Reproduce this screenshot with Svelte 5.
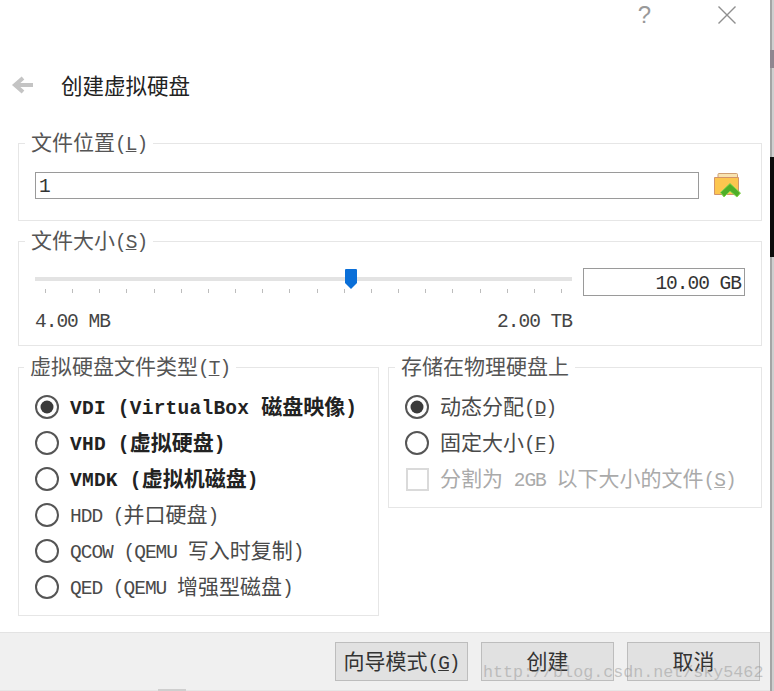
<script>
  const types = [
    { label: 'VDI (VirtualBox 磁盘映像)', bold: true, on: true },
    { label: 'VHD (虚拟硬盘)', bold: true },
    { label: 'VMDK (虚拟机磁盘)', bold: true },
    { label: 'HDD (并口硬盘)' },
    { label: 'QCOW (QEMU 写入时复制)' },
    { label: 'QED (QEMU 增强型磁盘)' }
  ]
  const ticks = Array.from({ length: 20 })

  // latin runs get their own narrower face, &X marks the underlined mnemonic
  function parts(text) {
    const out = []
    for (const run of text.match(/[\x20-\x7e]+|[^\x20-\x7e]+/g)) {
      const latin = /^[\x20-\x7e]/.test(run)
      const bits = latin ? run.split(/(&.)/) : [run]
      for (const bit of bits) {
        if (!bit) continue
        if (bit[0] === '&') out.push({ text: bit[1], latin, mark: true })
        else out.push({ text: bit, latin, mark: false })
      }
    }
    return out
  }
</script>

{#snippet txt(text)}
  {#each parts(text) as p}{#if p.mark}<u class="lat">{p.text}</u>{:else if p.latin}<span class="lat">{p.text}</span>{:else}{p.text}{/if}{/each}
{/snippet}

{#snippet radio(on)}
  <svg class="radio" width="26" height="26" viewBox="0 0 26 26">
    <circle cx="13" cy="13" r="11" fill="#fff" stroke="#555" stroke-width="2" />
    {#if on}<circle cx="13" cy="13" r="6.500" fill="#3a3a3a" />{/if}
  </svg>
{/snippet}

<div class="screen">
  <div class="dialog">
    <div class="content">
      <div class="titlebar">
        <span class="help">?</span>
        <svg class="close" width="18" height="18" viewBox="0 0 18 18">
          <path d="M0.500 0.500 L17.500 17.500 M17.500 0.500 L0.500 17.500" stroke="#8f8f8f" stroke-width="1.400" fill="none" />
        </svg>
      </div>

      <div class="heading">
        <svg width="24" height="20" viewBox="0 0 24 20">
          <path d="M22 10 H6 M12 3 L4 10 L12 17" stroke="#c4c4c4" stroke-width="4" fill="none" />
        </svg>
        <h1>创建虚拟硬盘</h1>
      </div>

      <fieldset class="location">
        <legend>{@render txt('文件位置(&L)')}</legend>
        <div class="row">
          <div class="input lat">1</div>
          <svg class="folder" width="29" height="27" viewBox="0 0 29 27">
            <path d="M5 6 V2.500 Q5 1.500 6 1.500 H23.500 Q24.500 1.500 24.500 2.500 V7 H5 Z" fill="#f8e3b0" stroke="#cf9f72" />
            <path d="M1.500 5.500 H25.500 V22.500 H1.500 Z" fill="#fcc64f" stroke="#d2946a" />
            <path d="M7.500 20.500 L17 11.500 L27.500 21 L24 25 L17 19 L11 25 Z" fill="#4fae28" stroke="#86d64f" />
          </svg>
        </div>
      </fieldset>

      <fieldset class="size">
        <legend>{@render txt('文件大小(&S)')}</legend>
        <div class="size-row">
          <div class="slider">
            <div class="track">
              <svg class="thumb" width="12" height="20" viewBox="0 0 12 20">
                <path d="M0 1 Q0 0 1 0 H11 Q12 0 12 1 V14 L6 20 L0 14 Z" fill="#0a6fd8" />
              </svg>
            </div>
            <div class="ticks">
              {#each ticks as _}<i></i>{/each}
            </div>
            <div class="limits lat"><span>4.00 MB</span><span>2.00 TB</span></div>
          </div>
          <div class="input value lat">10.00 GB</div>
        </div>
      </fieldset>

      <div class="columns">
        <fieldset class="types">
          <legend>{@render txt('虚拟硬盘文件类型(&T)')}</legend>
          {#each types as t}
            <div class="option" class:bold={t.bold}>
              {@render radio(t.on)}
              <span>{@render txt(t.label)}</span>
            </div>
          {/each}
        </fieldset>

        <fieldset class="storage">
          <legend>存储在物理硬盘上</legend>
          <div class="option">
            {@render radio(true)}
            <span>{@render txt('动态分配(&D)')}</span>
          </div>
          <div class="option">
            {@render radio(false)}
            <span>{@render txt('固定大小(&F)')}</span>
          </div>
          <div class="option disabled">
            <i class="check"></i>
            <span>{@render txt('分割为 2GB 以下大小的文件(&S)')}</span>
          </div>
        </fieldset>
      </div>
    </div>

    <div class="footer">
      <button>{@render txt('向导模式(&G)')}</button>
      <button>创建</button>
      <button>取消</button>
      <span class="watermark">http://blog.csdn.net/sky5462</span>
    </div>
  </div>

  <div class="backdrop">
    <i class="speck"></i>
    <i class="dark"></i>
  </div>
</div>

<style>
  :global(body) {
    margin: 0;
    background: #fff;
  }

  .screen {
    display: flex;
    width: 774px;
    height: 691px;
    overflow: hidden;
  }

  .dialog {
    flex: 0 0 769px;
    height: 691px;
    box-sizing: border-box;
    display: flex;
    flex-direction: column;
    background: #fff;
    color: #444;
    font-family: 'Noto Sans CJK SC', sans-serif;
    font-size: 21px;
    line-height: 22px;
  }

  .backdrop {
    flex: 1;
    display: flex;
    flex-direction: column;
    box-sizing: border-box;
    background: #cfcfcf;
    border-left: 2px solid #a5a5a5;
  }

  .speck {
    height: 18px;
    margin: 50px 0 0 -2px;
    background: #8f8690;
  }

  .dark {
    height: 100px;
    margin: 89px 0 0 -2px;
    background: #0c0c0c;
  }

  .lat {
    font-family: 'Liberation Mono', monospace;
    font-size: 19.500px;
    letter-spacing: -1px;
    line-height: 0;
  }

  .content {
    flex: 1;
    padding: 0 8px 0 18px;
    display: flex;
    flex-direction: column;
  }

  .titlebar {
    height: 30px;
    display: flex;
    align-items: center;
    justify-content: flex-end;
    gap: 67px;
    padding-right: 26px;
  }

  .help {
    font-family: 'Liberation Sans', sans-serif;
    font-size: 24px;
    color: #999;
  }

  .heading {
    height: 62px;
    margin: 24px 0 16px -7px;
    display: flex;
    align-items: center;
    gap: 26px;
  }

  h1 {
    margin: 0;
    font-size: 21.500px;
    font-weight: 400;
    color: #222;
  }

  fieldset {
    margin: 0;
    border: 1px solid #e6e6e6;
    padding: 0;
    box-sizing: border-box;
    min-width: 0;
  }

  legend {
    margin-left: 6px;
    padding: 0 6px 4px;
    color: #555;
    line-height: 18px;
  }

  .location {
    height: 89px;
  }

  .row {
    display: flex;
    align-items: center;
    gap: 14px;
    padding: 18px 19px 0 16px;
  }

  .input {
    height: 27px;
    line-height: 29px;
    box-sizing: border-box;
    border: 1px solid #9a9a9a;
    padding: 0 3px;
    flex: 1;
    color: #333;
  }

  .size {
    height: 116px;
    margin-top: 9px;
  }

  .size-row {
    display: flex;
    padding: 17px 16px 0 16px;
    gap: 11px;
  }

  .slider {
    width: 537px;
  }

  .track {
    position: relative;
    height: 4px;
    margin-top: 8px;
    background: #e3e3e3;
  }

  .thumb {
    position: absolute;
    left: 310px;
    top: -8px;
  }

  .ticks {
    display: flex;
    justify-content: space-between;
    padding: 0 10px;
    margin-top: 8px;
  }

  .ticks i {
    width: 1px;
    height: 4px;
    background: #bdbdbd;
  }

  .limits {
    display: flex;
    justify-content: space-between;
    margin-top: 18px;
    color: #444;
    line-height: 22px;
  }

  .value {
    flex: 0 0 162px;
    text-align: right;
    height: 28px;
    line-height: 31px;
    margin-top: -1px;
  }

  .columns {
    display: flex;
    gap: 9px;
    margin-top: 10px;
    align-items: flex-start;
  }

  .types {
    width: 361px;
    height: 260px;
    padding: 11px 15px 0;
  }

  .types legend {
    margin-left: -10px;
  }

  .storage {
    width: 374px;
    height: 152px;
    padding: 11px 15px 0;
  }

  .storage legend {
    margin-left: -9px;
  }

  .option {
    height: 36px;
    display: flex;
    align-items: center;
    gap: 10px;
    color: #4a4a4a;
  }

  .option span {
    padding-bottom: 4px;
  }

  .option .lat {
    padding-bottom: 0;
  }

  .bold {
    font-weight: 700;
    color: #222;
  }

  .bold .lat {
    letter-spacing: 0.250px;
  }

  .radio {
    flex: none;
  }

  .check {
    width: 23px;
    height: 23px;
    margin: 0 1.500px;
    box-sizing: border-box;
    border: 2px solid #dadada;
  }

  .disabled {
    color: #aaa;
  }

  .footer {
    position: relative;
    height: 59px;
    box-sizing: border-box;
    background: #f0f0f0;
    border-top: 1px solid #e3e3e3;
    border-bottom: 1px solid #e6e6e6;
    display: flex;
    justify-content: flex-end;
    align-items: flex-start;
    gap: 13px;
    padding: 9px 10px 0 0;
  }

  .footer::after {
    content: '';
    position: absolute;
    left: 158px;
    bottom: -1px;
    width: 28px;
    height: 2px;
    background: #cfcfcf;
  }

  button {
    width: 133px;
    height: 39px;
    padding: 0 0 3px;
    background: #e1e1e1;
    border: 1px solid #bdbdbd;
    color: #333;
    font: 21px/22px 'Noto Sans CJK SC', sans-serif;
  }

  .watermark {
    position: absolute;
    left: 483px;
    top: 30px;
    color: rgba(150, 150, 150, 0.5);
    font: 16.700px 'Liberation Mono', monospace;
  }
</style>
